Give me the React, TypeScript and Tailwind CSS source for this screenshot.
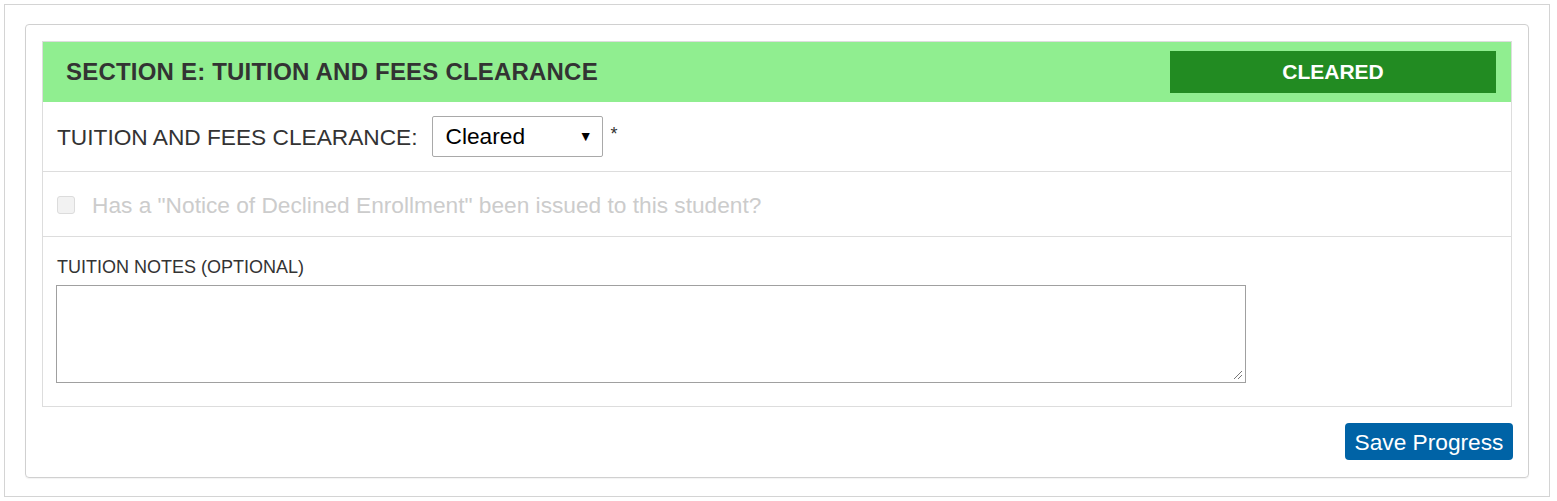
export default function App() {
  return (
    <div className="w-[1557px] h-[501px] bg-white p-[4px] font-['Liberation_Sans',Arial,sans-serif]">
      <div className="h-[493px] w-[1546px] border border-[#d4d4d4] pt-[19px] px-[20px]">
        <div className="h-[454px] rounded-[4px] border border-[#d0d0d0] shadow-[0_1px_1px_rgba(0,0,0,0.05)] pt-[16px] px-[16px]">
          {/* section panel */}
          <div className="border border-[#dddddd]">
            <div className="flex h-[60px] items-center justify-between bg-[#90ee90] pl-[23px] pr-[15px]">
              <h2 className="text-[24px] leading-[28px] font-bold tracking-[0.2px] text-[#333333]">SECTION E: TUITION AND FEES CLEARANCE</h2>
              <div className="flex h-[42px] w-[326px] items-center justify-center bg-[#228b22] text-[21px] font-bold text-white">
                CLEARED
              </div>
            </div>

            <div className="flex h-[70px] items-center border-b border-[#dddddd] px-[14px] pt-[2px] text-[22.7px] text-[#333333]">
              <span>TUITION AND FEES CLEARANCE:</span>
              <div className="ml-[14px] -mt-[2px] flex h-[41px] w-[171px] items-center justify-between rounded-[2px] border border-[#a9a9a9] pl-[13px] pr-[9px] text-black">
                <span>Cleared</span>
                <span className="text-[14px]">▼</span>
              </div>
              <span className="ml-[8px] -mt-[6px] text-[18px]">*</span>
            </div>

            <div className="flex h-[65px] items-center border-b border-[#dddddd] px-[14px] pt-[3px] text-[22.7px] text-[#cccccc]">
              <div className="-mt-[2px] h-[18px] w-[18px] rounded-[3px] border border-[#dcdcdc] bg-[#f2f2f2]" />
              <span className="ml-[17px]">Has a "Notice of Declined Enrollment" been issued to this student?</span>
            </div>

            <div className="pl-[13px] pr-[14px] pt-[19px] pb-[23px]">
              <div className="pl-[1px] text-[18px] leading-[22px] text-[#333333]">TUITION NOTES (OPTIONAL)</div>
              <div className="relative mt-[7px] h-[98px] w-[1190px] border border-[#a0a0a0]">
                <svg className="absolute bottom-[2px] right-[2px]" width="12" height="12" viewBox="0 0 12 12">
                  <path d="M11 3 L3 11 M11 7 L7 11" stroke="#777" strokeWidth="1" fill="none" />
                </svg>
              </div>
            </div>
          </div>

          <div className="mt-[16px] -mr-[1px] flex justify-end">
            <button className="h-[37px] w-[168px] rounded-[4px] bg-[#0063a6] text-[22.7px] leading-[28px] text-white">
              Save Progress
            </button>
          </div>
        </div>
      </div>
    </div>
  );
}
